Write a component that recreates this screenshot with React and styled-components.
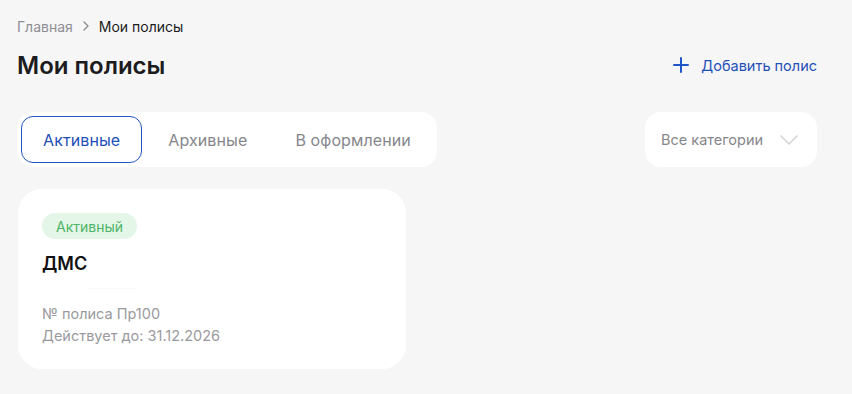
import styled, { createGlobalStyle } from 'styled-components';

const GlobalStyle = createGlobalStyle`
    * {
        box-sizing: border-box;
    }
    body {
        margin: 0;
        background: #f6f6f6;
        font-family: Inter, 'Noto Sans', sans-serif;
        color: #1c1c1e;
    }
`;

const tabs = ['Активные', 'Архивные', 'В оформлении'];

const policies = [
    {
        id: 1,
        status: 'Активный',
        title: 'ДМС',
        number: 'Пр100',
        validUntil: '31.12.2026',
    },
];

const PlusIcon = () => (
    <svg width="16" height="16" viewBox="0 0 16 16" fill="none">
        <path
            d="M8 1v14M1 8h14"
            stroke="#1f56c9"
            strokeWidth="2"
            strokeLinecap="round"
        />
    </svg>
);

const ChevronRight = () => (
    <svg width="8" height="10" viewBox="0 0 8 10" fill="none">
        <path
            d="M2 1l4 4-4 4"
            stroke="#8e8e93"
            strokeWidth="1.4"
            strokeLinecap="round"
            strokeLinejoin="round"
        />
    </svg>
);

const ChevronDown = () => (
    <svg width="18" height="10" viewBox="0 0 18 10" fill="none">
        <path
            d="M1 1l8 8 8-8"
            stroke="#d4d4d8"
            strokeWidth="1.6"
            strokeLinecap="round"
            strokeLinejoin="round"
        />
    </svg>
);

export default function App() {
    const active = 0;

    return (
        <>
            <GlobalStyle />
            <Page>
                <Breadcrumbs>
                    <Crumb>Главная</Crumb>
                    <ChevronRight />
                    <Crumb current>Мои полисы</Crumb>
                </Breadcrumbs>

                <Header>
                    <Title>Мои полисы</Title>
                    <AddButton>
                        <PlusIcon />
                        Добавить полис
                    </AddButton>
                </Header>

                <Toolbar>
                    <Tabs>
                        {tabs.map((tab, idx) => (
                            <Tab key={tab} active={idx === active}>
                                {tab}
                            </Tab>
                        ))}
                    </Tabs>
                    <Select>
                        <span>Все категории</span>
                        <ChevronDown />
                    </Select>
                </Toolbar>

                <CardList>
                    {policies.map(policy => (
                        <Card key={policy.id}>
                            <Badge>{policy.status}</Badge>
                            <CardTitle>{policy.title}</CardTitle>
                            <Ghost />
                            <MetaList>
                                <Meta>№ полиса {policy.number}</Meta>
                                <Meta>Действует до: {policy.validUntil}</Meta>
                            </MetaList>
                        </Card>
                    ))}
                </CardList>
            </Page>
        </>
    );
}

const Page = styled.div`
    padding: 16px 35px 24px 17px;
`;

const Breadcrumbs = styled.div`
    display: flex;
    align-items: center;
    gap: 9px;
    height: 20px;
    font-size: 14px;
`;

const Crumb = styled.span`
    color: ${({ current }) => (current ? '#1c1c1e' : '#8e8e93')};
`;

const Header = styled.div`
    display: flex;
    align-items: center;
    justify-content: space-between;
    margin-top: 15px;
    height: 28px;
`;

const Title = styled.h1`
    margin: 0;
    font-size: 24px;
    font-weight: 600;
    color: #1c1c1e;
`;

const AddButton = styled.button`
    display: flex;
    align-items: center;
    gap: 12px;
    padding: 0;
    border: none;
    background: none;
    font-family: inherit;
    font-size: 14.5px;
    color: #1f4fb8;
    cursor: pointer;
`;

const Toolbar = styled.div`
    display: flex;
    justify-content: space-between;
    align-items: stretch;
    margin-top: 33px;
`;

const Tabs = styled.div`
    display: flex;
    gap: 4px;
    padding: 4px;
    background: #fff;
    border-radius: 16px;
`;

const Tab = styled.button`
    height: 47px;
    padding: 0 21px;
    border: 1px solid ${({ active }) => (active ? '#2155c4' : 'transparent')};
    border-radius: 12px;
    background: #fff;
    font-family: inherit;
    font-size: 16px;
    letter-spacing: 0.1px;
    color: ${({ active }) => (active ? '#1f4fb8' : '#86868c')};
    cursor: pointer;
`;

const Select = styled.div`
    display: flex;
    align-items: center;
    justify-content: space-between;
    width: 172px;
    padding: 0 19px 0 16px;
    background: #fff;
    border-radius: 16px;
    font-size: 14.5px;
    color: #86868c;
`;

const CardList = styled.div`
    display: grid;
    grid-template-columns: 388px;
    margin-top: 22px;
    margin-left: 1px;
`;

const Card = styled.div`
    display: flex;
    flex-direction: column;
    align-items: flex-start;
    height: 180px;
    padding: 24px;
    background: #fff;
    border-radius: 24px;
`;

const Badge = styled.span`
    display: inline-flex;
    align-items: center;
    height: 26px;
    padding: 0 14px;
    border-radius: 13px;
    background: #e4f6e8;
    color: #4cb466;
    font-size: 14px;
`;

const CardTitle = styled.div`
    margin-top: 14px;
    font-size: 18px;
    font-weight: 600;
    color: #111;
`;

const Ghost = styled.div`
    width: 50px;
    height: 1px;
    margin: 14px 0 0 46px;
    background: #fafafa;
`;

const MetaList = styled.div`
    display: flex;
    flex-direction: column;
    gap: 4px;
    margin-top: 16px;
`;

const Meta = styled.div`
    font-size: 14.5px;
    line-height: 18px;
    color: #9a9a9e;
`;
